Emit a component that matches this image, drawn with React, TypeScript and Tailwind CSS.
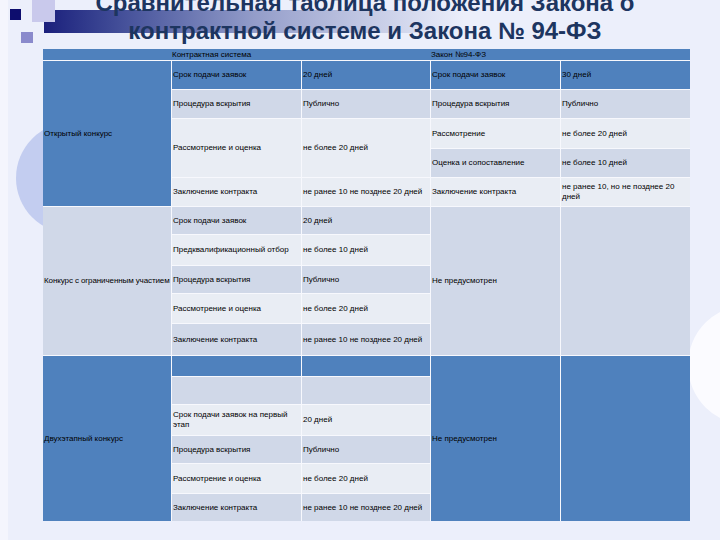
import React from "react";

const BLUE = "bg-[#4f81bd]";
const L1 = "bg-[#d0d8e8]";
const L2 = "bg-[#e9edf4]";

type CellProps = { className: string; children?: React.ReactNode };

function Cell({ className, children }: CellProps) {
  return <div className={`flex items-center pl-px text-[8px] leading-[10px] text-black ${className}`}>{children}</div>;
}

/** Background shapes of the slide template. */
function Decor() {
  return (
    <>
      <div className="absolute left-[44px] top-[10px] h-[23px] w-[420px] bg-gradient-to-r from-[#1b1f7c] via-[#6d79b4]/70 to-transparent" />
      <div className="absolute left-[32px] top-0 h-[22px] w-[23px] bg-[#c9c9ec]" />
      <div className="absolute left-[10px] top-[9px] h-[11px] w-[11px] bg-[#0d0d6e]" />
      <div className="absolute left-[21px] top-[32px] h-[11px] w-[12px] bg-[#8a8acc]" />
      <div className="absolute left-0 top-0 h-[540px] w-[8px] bg-[#f4f5fd]" />
      <div className="absolute left-[16px] top-[122px] h-[112px] w-[112px] rounded-full bg-[#c3cdf0]" />
      <div className="absolute left-[688px] top-[305px] h-[120px] w-[120px] rounded-full bg-[#fbfbff]" />
    </>
  );
}

export default function App() {
  return (
    <div className="relative h-[540px] w-[720px] overflow-hidden bg-[#eceffb] font-['Liberation_Sans',Arial,sans-serif]">
      <Decor />
      <div className="relative">
        <h1 className="-mt-[11px] pl-[10px] text-center text-[24px] font-bold leading-[28px] text-[#1d3560]">
          Сравнительная таблица положения Закона о
          <br />
          контрактной системе и Закона № 94-ФЗ
        </h1>

        <div className="ml-[43px] mt-[4px] grid w-[647px] grid-cols-[128px_129px_128px_129px_129px] grid-rows-[11px_28px_28px_29px_28px_28px_27px_30px_27px_29px_31px_20px_27px_30px_27px_29px_27px] gap-px bg-[#f7f8fd]">
          {/* header */}
          <div className={`col-span-5 col-start-1 row-start-1 grid grid-cols-[129px_259px_259px] items-center text-[8px] leading-[10px] ${BLUE}`}>
            <span />
            <span>Контрактная система</span>
            <span>Закон №94-ФЗ</span>
          </div>

          {/* открытый конкурс */}
          <Cell className={`col-start-1 row-start-2 row-span-5 ${BLUE}`}>Открытый конкурс</Cell>
          <Cell className={`col-start-2 row-start-2 ${BLUE}`}>Срок подачи заявок</Cell>
          <Cell className={`col-start-3 row-start-2 ${BLUE}`}>20 дней</Cell>
          <Cell className={`col-start-4 row-start-2 ${BLUE}`}>Срок подачи заявок</Cell>
          <Cell className={`col-start-5 row-start-2 ${BLUE}`}>30 дней</Cell>

          <Cell className={`col-start-2 row-start-3 ${L1}`}>Процедура вскрытия</Cell>
          <Cell className={`col-start-3 row-start-3 ${L1}`}>Публично</Cell>
          <Cell className={`col-start-4 row-start-3 ${L1}`}>Процедура вскрытия</Cell>
          <Cell className={`col-start-5 row-start-3 ${L1}`}>Публично</Cell>

          <Cell className={`col-start-2 row-start-4 row-span-2 ${L2}`}>Рассмотрение и оценка</Cell>
          <Cell className={`col-start-3 row-start-4 row-span-2 ${L2}`}>не более 20 дней</Cell>
          <Cell className={`col-start-4 row-start-4 ${L2}`}>Рассмотрение</Cell>
          <Cell className={`col-start-5 row-start-4 ${L2}`}>не более 20 дней</Cell>
          <Cell className={`col-start-4 row-start-5 ${L1}`}>Оценка и сопоставление</Cell>
          <Cell className={`col-start-5 row-start-5 ${L1}`}>не более 10 дней</Cell>

          <Cell className={`col-start-2 row-start-6 ${L2}`}>Заключение контракта</Cell>
          <Cell className={`col-start-3 row-start-6 ${L2}`}>не ранее 10 не позднее 20 дней</Cell>
          <Cell className={`col-start-4 row-start-6 ${L2}`}>Заключение контракта</Cell>
          <Cell className={`col-start-5 row-start-6 pr-2 ${L2}`}>не ранее 10, но не позднее 20 дней</Cell>

          {/* конкурс с ограниченным участием */}
          <Cell className={`col-start-1 row-start-7 row-span-5 whitespace-nowrap tracking-[-0.1px] ${L1}`}>Конкурс с ограниченным участием</Cell>
          <Cell className={`col-start-2 row-start-7 ${L1}`}>Срок подачи заявок</Cell>
          <Cell className={`col-start-3 row-start-7 ${L1}`}>20 дней</Cell>
          <Cell className={`col-start-2 row-start-8 ${L2}`}>Предквалификационный отбор</Cell>
          <Cell className={`col-start-3 row-start-8 ${L2}`}>не более 10 дней</Cell>
          <Cell className={`col-start-2 row-start-9 ${L1}`}>Процедура вскрытия</Cell>
          <Cell className={`col-start-3 row-start-9 ${L1}`}>Публично</Cell>
          <Cell className={`col-start-2 row-start-10 ${L2}`}>Рассмотрение и оценка</Cell>
          <Cell className={`col-start-3 row-start-10 ${L2}`}>не более 20 дней</Cell>
          <Cell className={`col-start-2 row-start-11 ${L1}`}>Заключение контракта</Cell>
          <Cell className={`col-start-3 row-start-11 ${L1}`}>не ранее 10 не позднее 20 дней</Cell>
          <Cell className={`col-start-4 row-start-7 row-span-5 ${L1}`}>Не предусмотрен</Cell>
          <Cell className={`col-start-5 row-start-7 row-span-5 ${L1}`} />

          {/* двухэтапный конкурс */}
          <Cell className={`col-start-1 row-start-12 row-span-6 ${BLUE}`}>Двухэтапный конкурс</Cell>
          <Cell className={`col-start-2 row-start-12 ${BLUE}`} />
          <Cell className={`col-start-3 row-start-12 ${BLUE}`} />
          <Cell className={`col-start-2 row-start-13 ${L1}`} />
          <Cell className={`col-start-3 row-start-13 ${L1}`} />
          <Cell className={`col-start-2 row-start-14 pr-1 ${L2}`}>Срок подачи заявок на первый этап</Cell>
          <Cell className={`col-start-3 row-start-14 ${L2}`}>20 дней</Cell>
          <Cell className={`col-start-2 row-start-15 ${L1}`}>Процедура вскрытия</Cell>
          <Cell className={`col-start-3 row-start-15 ${L1}`}>Публично</Cell>
          <Cell className={`col-start-2 row-start-16 ${L2}`}>Рассмотрение и оценка</Cell>
          <Cell className={`col-start-3 row-start-16 ${L2}`}>не более 20 дней</Cell>
          <Cell className={`col-start-2 row-start-17 ${L1}`}>Заключение контракта</Cell>
          <Cell className={`col-start-3 row-start-17 ${L1}`}>не ранее 10 не позднее 20 дней</Cell>
          <Cell className={`col-start-4 row-start-12 row-span-6 ${BLUE}`}>Не предусмотрен</Cell>
          <Cell className={`col-start-5 row-start-12 row-span-6 ${BLUE}`} />
        </div>
      </div>
    </div>
  );
}
